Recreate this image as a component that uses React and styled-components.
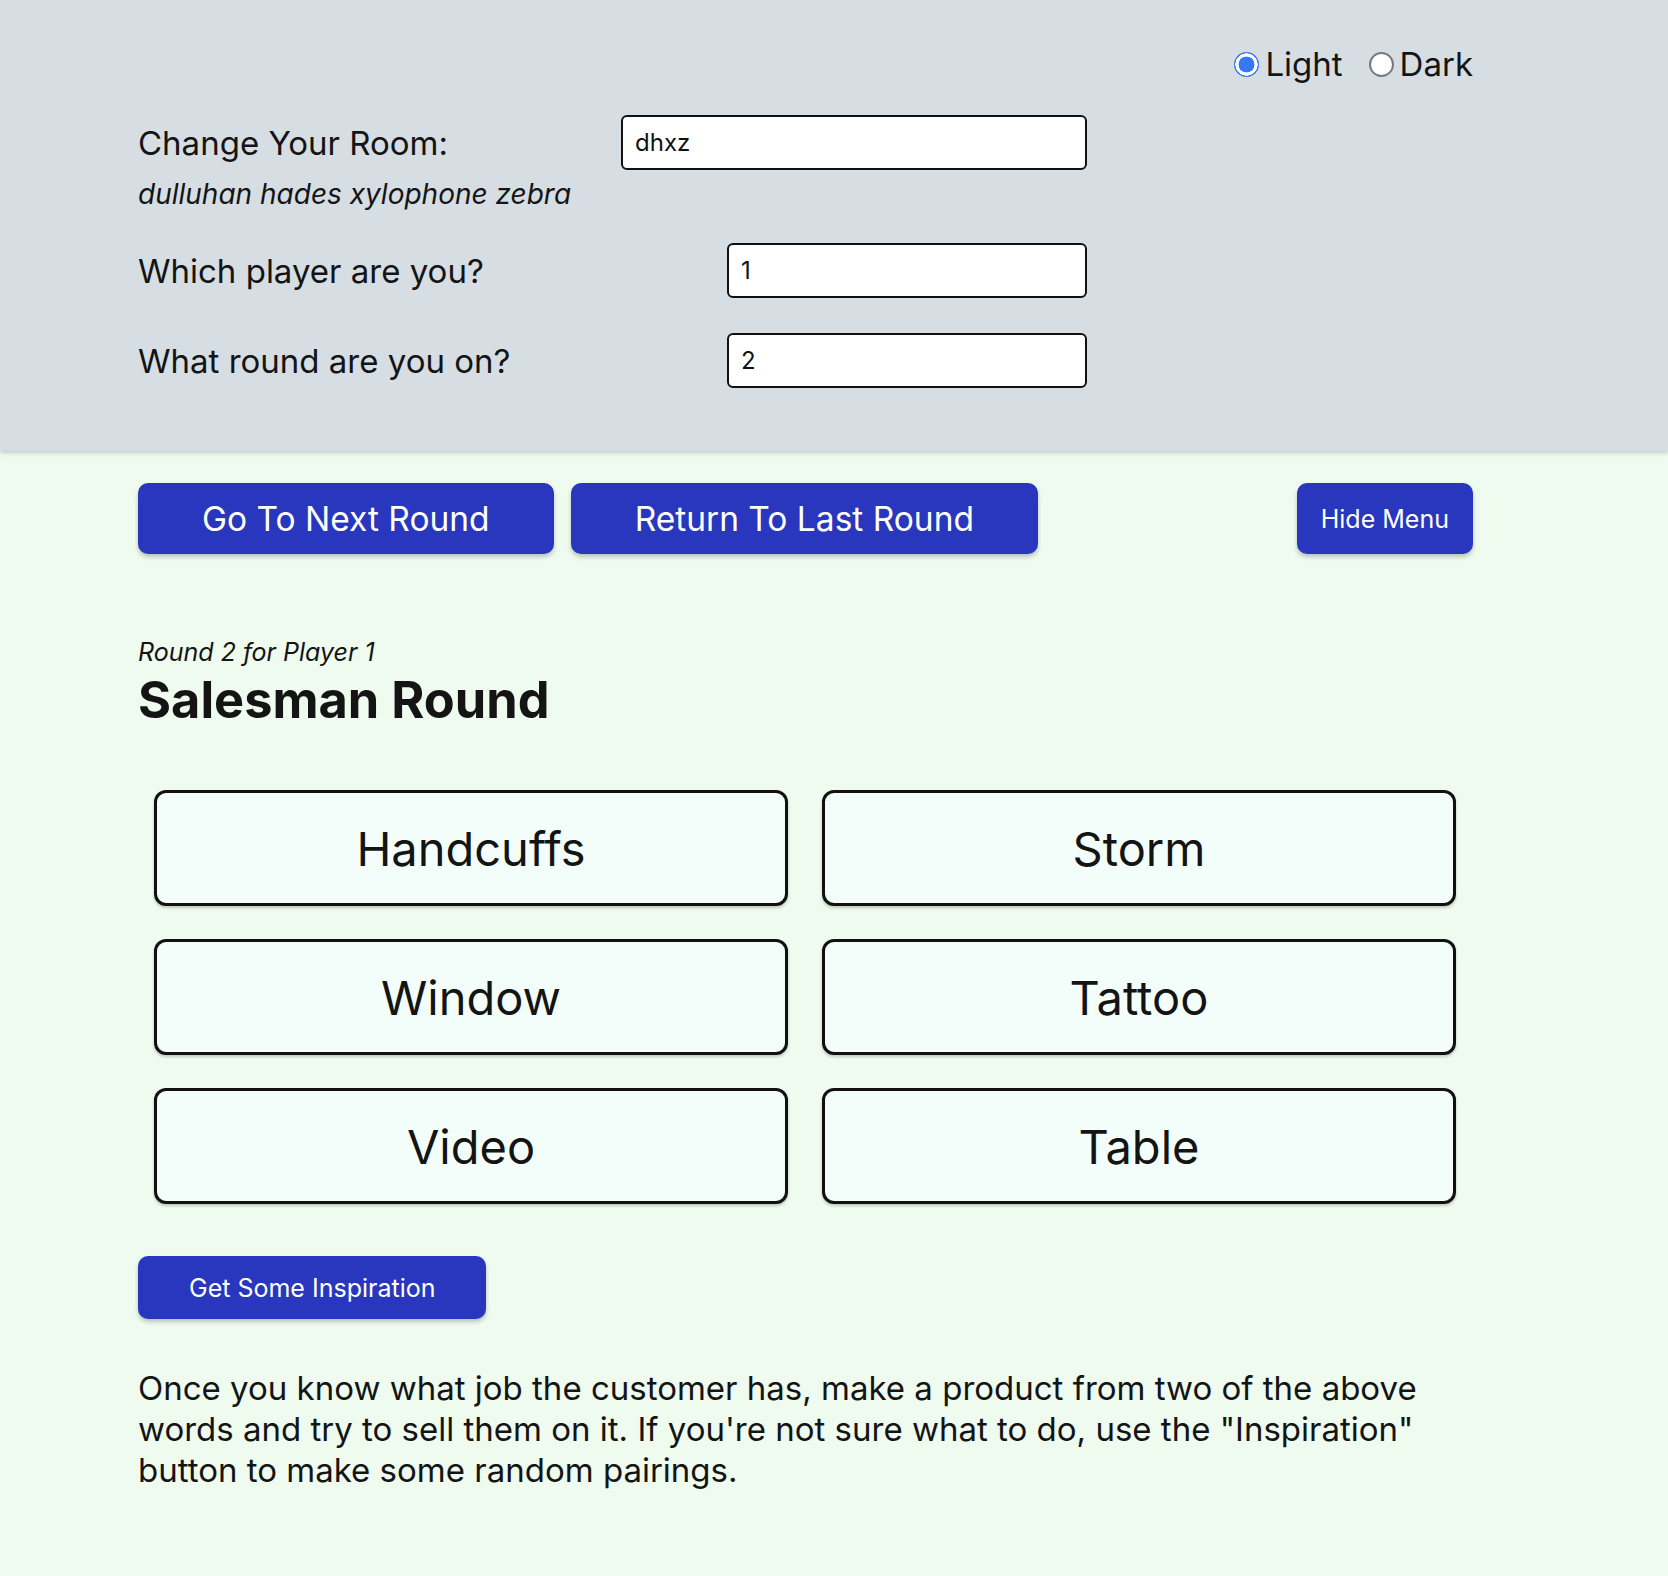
import React, { useState } from "react";
import styled, { createGlobalStyle } from "styled-components";

const GlobalStyle = createGlobalStyle`
  body {
    margin: 0;
    background: #effbef;
    font-family: Inter, "Noto Sans", "Liberation Sans", sans-serif;
    color: #141414;
  }
`;

const Page = styled.div`
  min-height: 1576px;
  background: #effbef;
`;

const Menu = styled.header`
  background: #d6dee4;
  padding: 45px 195px 61px 138px;
  box-shadow: 0 2px 4px rgba(0, 0, 0, 0.18);
  position: relative;
`;

const ThemeRow = styled.div`
  display: flex;
  justify-content: flex-end;
  align-items: center;
  gap: 26px;
  height: 38px;
  margin-bottom: 32px;
`;

const RadioLabel = styled.label`
  display: flex;
  align-items: center;
  gap: 6px;
  font-size: 33px;
  line-height: 38px;
  cursor: pointer;
`;

const RadioDot = styled.span`
  width: 25px;
  height: 25px;
  border-radius: 50%;
  box-sizing: border-box;
  background: ${(p) =>
    p.$checked
      ? "radial-gradient(circle, #3478f6 0 44%, #ffffff 46% 62%, #3478f6 64%)"
      : "#ffffff"};
  border: ${(p) => (p.$checked ? "none" : "2px solid #7a7a7a")};
`;

const Form = styled.div`
  display: flex;
  flex-direction: column;
  gap: 33px;
  width: 949px;
`;

const FormRow = styled.div`
  display: flex;
  justify-content: space-between;
  align-items: flex-start;
`;

const LabelCol = styled.div`
  display: flex;
  flex-direction: column;
`;

const FieldLabel = styled.div`
  font-size: 33px;
  line-height: 57px;
`;

const RoomWords = styled.div`
  font-size: 28px;
  line-height: 32px;
  font-style: italic;
  margin-top: 6px;
`;

const TextInput = styled.input`
  box-sizing: border-box;
  width: ${(p) => p.$width}px;
  height: 55px;
  border: 2px solid #111;
  border-radius: 6px;
  background: #fff;
  font-family: inherit;
  font-size: 24px;
  padding: 0 12px;
  color: #111;
  outline: none;
`;

const Main = styled.main`
  padding: 32px 195px 60px 138px;
`;

const ButtonRow = styled.div`
  display: flex;
  gap: 17px;
`;

const BlueButton = styled.button`
  height: ${(p) => p.$height || 71}px;
  padding: 0 ${(p) => p.$pad || 64}px;
  font-family: inherit;
  font-size: ${(p) => p.$size || 33.5}px;
  color: #fff;
  background: #2837bd;
  border: none;
  border-radius: 10px;
  box-shadow: 0 3px 4px rgba(0, 0, 0, 0.22);
  cursor: pointer;
  margin-left: ${(p) => (p.$push ? "auto" : "0")};
`;

const RoundInfo = styled.div`
  margin-top: 83px;
  font-size: 25px;
  line-height: 30px;
  font-style: italic;
`;

const Title = styled.h1`
  margin: 2px 0 0;
  font-size: 50.5px;
  line-height: 62px;
  font-weight: 700;
`;

const WordGrid = styled.div`
  display: grid;
  grid-template-columns: 1fr 1fr;
  column-gap: 34px;
  row-gap: 33px;
  margin: 59px 17px 0 16px;
`;

const WordCard = styled.div`
  height: 116px;
  box-sizing: border-box;
  border: 3px solid #111;
  border-radius: 12px;
  background: #f3fefa;
  box-shadow: 0 2px 3px rgba(0, 0, 0, 0.2);
  display: flex;
  align-items: center;
  justify-content: center;
  font-size: 47px;
`;

const InspireWrap = styled.div`
  margin-top: 52px;
`;

const Instructions = styled.p`
  margin: 49px 0 0;
  font-size: 33px;
  line-height: 41px;
  max-width: 1335px;
`;

const words = ["Handcuffs", "Storm", "Window", "Tattoo", "Video", "Table"];

export default function App() {
  const [theme, setTheme] = useState("light");
  const [room, setRoom] = useState("dhxz");
  const [player, setPlayer] = useState("1");
  const [round, setRound] = useState("2");

  return (
    <Page>
      <GlobalStyle />
      <Menu>
        <ThemeRow>
          <RadioLabel onClick={() => setTheme("light")}>
            <RadioDot $checked={theme === "light"} />
            Light
          </RadioLabel>
          <RadioLabel onClick={() => setTheme("dark")}>
            <RadioDot $checked={theme === "dark"} />
            Dark
          </RadioLabel>
        </ThemeRow>
        <Form>
          <FormRow>
            <LabelCol>
              <FieldLabel>Change Your Room:</FieldLabel>
              <RoomWords>dulluhan hades xylophone zebra</RoomWords>
            </LabelCol>
            <TextInput $width={466} value={room} onChange={(e) => setRoom(e.target.value)} />
          </FormRow>
          <FormRow>
            <FieldLabel>Which player are you?</FieldLabel>
            <TextInput $width={360} value={player} onChange={(e) => setPlayer(e.target.value)} />
          </FormRow>
          <FormRow>
            <FieldLabel>What round are you on?</FieldLabel>
            <TextInput $width={360} value={round} onChange={(e) => setRound(e.target.value)} />
          </FormRow>
        </Form>
      </Menu>

      <Main>
        <ButtonRow>
          <BlueButton>Go To Next Round</BlueButton>
          <BlueButton>Return To Last Round</BlueButton>
          <BlueButton $push $size={25} $pad={24}>Hide Menu</BlueButton>
        </ButtonRow>

        <RoundInfo>Round {round} for Player {player}</RoundInfo>
        <Title>Salesman Round</Title>

        <WordGrid>
          {words.map((w) => (
            <WordCard key={w}>{w}</WordCard>
          ))}
        </WordGrid>

        <InspireWrap>
          <BlueButton $height={63} $size={25} $pad={51}>Get Some Inspiration</BlueButton>
        </InspireWrap>

        <Instructions>
          Once you know what job the customer has, make a product from two of the above
          words and try to sell them on it. If you're not sure what to do, use the
          "Inspiration" button to make some random pairings.
        </Instructions>
      </Main>
    </Page>
  );
}
